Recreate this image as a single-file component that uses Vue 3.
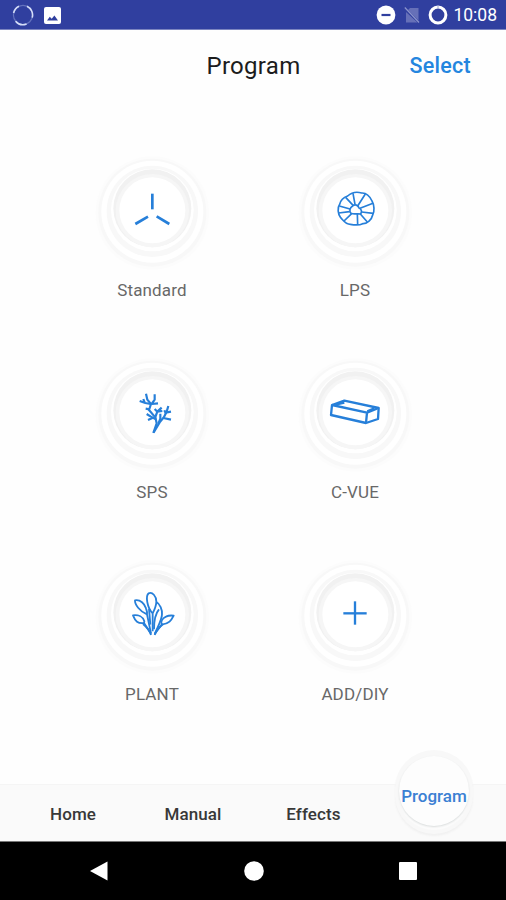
<template>
  <div class="screen">
    <header class="status-bar">
      <div class="status-group">
        <svg class="status-spinner" viewBox="0 0 22 22">
          <circle class="spin-base" cx="11" cy="11" r="9.6" />
          <path class="spin-bright" d="M15 2.3A9.6 9.6 0 0 1 20.2 13.6M3.6 17.2A9.6 9.6 0 0 0 14.6 19.9M1.6 9A9.6 9.6 0 0 1 7 2.3" />
        </svg>
        <svg class="status-image" viewBox="0 0 17 17">
          <rect width="17" height="17" rx="2" fill="#fff" />
          <path d="M3 13.4 5.8 9.8 7.7 11.8 10.4 8.5 14 13.4Z" fill="#303f9f" />
        </svg>
      </div>
      <div class="status-group">
        <svg class="status-dnd" viewBox="0 0 20 20">
          <circle cx="10" cy="10" r="9.4" fill="#fff" />
          <path d="M5.5 10h9" stroke="#303f9f" stroke-width="2.2" />
        </svg>
        <svg class="status-sim" viewBox="0 0 16 18">
          <path d="M6 2h8.5v12.5L4 4ZM2 6l11.5 10.5H2Z" fill="#6670b8" />
          <path d="M.8 1.5 15 16.5" stroke="#8b93cb" stroke-width="1.2" />
        </svg>
        <svg class="status-ring" viewBox="0 0 20 20">
          <circle cx="10" cy="10" r="7.9" fill="none" stroke="#fff" stroke-width="3" />
          <path d="M10 .5v3" stroke="#8b93cb" stroke-width=".8" />
        </svg>
        <span class="status-time">10:08</span>
      </div>
    </header>

    <div class="title-bar">
      <h1 class="title">Program</h1>
      <button type="button" class="select-btn">Select</button>
    </div>

    <main class="programs">
      <div v-for="item in programs" :key="item.id" class="program">
        <svg class="dial" viewBox="0 0 360 360">
          <circle cx="181" cy="189" r="170" fill="#fcfcfc" />
          <circle cx="181" cy="188" r="162" fill="#f8f8f8" />
          <circle cx="181" cy="185" r="153" fill="#fff" />
          <circle cx="181" cy="184" r="137" fill="#f8f8f8" />
          <circle cx="181" cy="180" r="124" fill="#fff" />
          <circle cx="181" cy="175" r="117" fill="#f1f1f1" />
          <circle cx="181" cy="182" r="110" fill="#f6f6f6" />
          <circle cx="181" cy="181" r="99" fill="#fff" />
          <g class="glyph" :stroke-width="item.stroke">
            <path v-for="d in item.paths" :key="d" :d="d" />
          </g>
        </svg>
        <span class="program-label">{{ item.label }}</span>
      </div>
    </main>

    <nav class="tabs">
      <a v-for="tab in tabs" :key="tab" class="tab">{{ tab }}</a>
      <div class="tab-current">
        <span class="tab-knob">Program</span>
      </div>
    </nav>

    <footer class="system-nav">
      <svg viewBox="0 0 20 20"><path d="M1 10 18.5.6v18.8Z" /></svg>
      <svg viewBox="0 0 20 20"><circle cx="10" cy="10" r="9.8" /></svg>
      <svg viewBox="0 0 20 20"><rect x="1" y="1" width="18" height="18" rx="1" /></svg>
    </footer>
  </div>
</template>

<script setup>
const tabs = ['Home', 'Manual', 'Effects']

const programs = [
  {
    id: 'standard',
    label: 'Standard',
    stroke: 8,
    paths: ['M181 131V178', 'M168 200 130 222', 'M194 199 232 222'],
  },
  {
    id: 'lps',
    label: 'LPS',
    stroke: 5,
    paths: [
      'M158 138C170 127 187 125 200 129C214 128 225 140 231 153C238 165 239 184 233 195C230 209 217 222 203 221C192 227 177 225 166 223C152 223 145 211 137 203C128 192 127 173 134 163C137 149 149 141 158 138Z',
      'M173 168C180 161 190 166 192 174C200 177 202 187 196 192C186 190 177 194 168 190C162 184 164 173 173 168Z',
      'M152 142 175 167M133 168 165 177M131 189 164 185M147 213 170 191M188 224 187 192M217 216 196 192M235 190 200 186M234 160 195 175M211 132 188 168M174 130 180 163',
    ],
  },
  {
    id: 'sps',
    label: 'SPS',
    stroke: 6.5,
    paths: [
      'M184 243 194 214 190 196 171 174 177 156 166 143 162 125',
      'M185 241 203 211 216 195 224 179 229 162',
      'M176 156 160 153 143 147M158 152 154 141M178 157 188 143V127M179 156 198 154',
      'M172 172 161 170M192 202 180 196 164 186M181 198 168 204M190 195 196 179 209 167M196 179 188 171M196 179 211 177',
      'M199 215 205 200V185M214 198 237 203M222 185 217 175M225 181 237 179',
    ],
  },
  {
    id: 'cvue',
    label: 'C-VUE',
    stroke: 7,
    paths: [
      'M111 159 148 146 251 168 249 201 213 213 108 189Z',
      'M111 159 216 182 251 168M216 182 213 213',
      'M122 158 148 152M217 178 238 169',
    ],
  },
  {
    id: 'plant',
    label: 'PLANT',
    stroke: 5.5,
    paths: [
      'M182 178C165 160 160 126 170 118C181 113 193 126 193 143C193 154 188 166 182 178V232',
      'M165 181C143 172 128 151 129 139C145 136 158 149 162 163C165 171 166 176 165 181L177 238',
      'M193 144C204 150 211 166 210 181C210 197 198 216 189 238',
      'M201 166C189 180 186 201 186 226M171 164 175 212',
      'M156 207C137 209 130 202 123 184C139 182 153 188 157 202L156 207 177 239',
      'M209 212C206 203 211 193 222 188C230 184 238 184 245 185C238 199 231 210 209 212L188 240',
      'M153 210C164 219 173 230 177 243M213 211C201 220 192 231 188 243',
    ],
  },
  {
    id: 'add',
    label: 'ADD/DIY',
    stroke: 7,
    paths: ['M180 142V212', 'M145 178H215'],
  },
]
</script>

<style>
body {
  margin: 0;
  background: #fff;
}
</style>

<style scoped>
.screen {
  display: flex;
  flex-direction: column;
  width: 506px;
  height: 900px;
  overflow: hidden;
  background: #fefefe;
  font-family: Roboto, 'Liberation Sans', sans-serif;
}

.status-bar {
  display: flex;
  align-items: center;
  justify-content: space-between;
  box-sizing: border-box;
  height: 30px;
  padding: 1px 9px 0 12px;
  background: #303f9f;
  border-bottom: 1px solid #7c85c0;
}

.status-group {
  display: flex;
  align-items: center;
}

.status-spinner {
  width: 22px;
  height: 22px;
  margin-right: 10px;
  fill: none;
}

.spin-base {
  stroke: #6472bd;
  stroke-width: 1.2;
}

.spin-bright {
  stroke: #d5def8;
  stroke-width: 1.6;
}

.status-image {
  width: 17px;
  height: 17px;
}

.status-dnd,
.status-ring {
  width: 20px;
  height: 20px;
}

.status-dnd {
  margin-right: 1px;
}

.status-sim {
  width: 16px;
  height: 18px;
  margin: 0 8px 0 7px;
}

.status-time {
  margin-left: 5px;
  font-size: 17.5px;
  line-height: 20px;
  color: #fff;
}

.title-bar {
  display: grid;
  grid-template-columns: 1fr auto 1fr;
  align-items: center;
  height: 72px;
  padding: 0 35px 0 36px;
}

.title {
  grid-column: 2;
  margin: 0;
  font-size: 24px;
  font-weight: 400;
  letter-spacing: 0.3px;
  color: #1c1c1c;
}

.select-btn {
  justify-self: end;
  padding: 0 0 2px;
  border: 0;
  background: none;
  font-family: inherit;
  font-size: 21.5px;
  font-weight: 500;
  letter-spacing: 0.25px;
  color: #2486df;
}

.programs {
  display: grid;
  grid-template-columns: 120px 120px;
  grid-auto-rows: 155px;
  gap: 47px 83px;
  padding: 48px 0 0 92px;
  flex: 1;
  min-height: 0;
}

.program {
  display: flex;
  flex-direction: column;
  align-items: center;
}

.dial {
  width: 120px;
  height: 120px;
}

.glyph {
  fill: none;
  stroke: #267fd9;
  stroke-linejoin: round;
}

.program-label {
  margin-top: 10px;
  font-size: 17px;
  line-height: 20px;
  letter-spacing: 0.15px;
  color: #686868;
}

.tabs {
  display: grid;
  grid-template-columns: 120px 120px 121px 120px;
  align-items: center;
  box-sizing: border-box;
  height: 57px;
  padding-left: 13px;
  background: #fafafa;
  border-top: 1px solid #f5f5f5;
}

.tab {
  padding-top: 2px;
  text-align: center;
  font-size: 17px;
  font-weight: 500;
  letter-spacing: 0.1px;
  color: #383838;
}

.tab-current {
  display: flex;
  justify-content: center;
  align-items: flex-start;
  box-sizing: border-box;
  width: 78px;
  height: 84px;
  margin-top: -43px;
  padding-top: 6px;
  justify-self: center;
  border-radius: 39px;
  background: #f8f8f8;
  box-shadow: 0 2px 2px #f1f1f1;
}

.tab-knob {
  width: 70px;
  height: 70px;
  border-radius: 50%;
  background: #fdfdfd;
  box-shadow: 0 1px 2px #d9dcdc, 0 4px 1px #fcfcfc;
  text-align: center;
  line-height: 80px;
  font-size: 17px;
  font-weight: 500;
  color: #3b80d3;
}

.system-nav {
  display: flex;
  align-items: center;
  justify-content: space-between;
  box-sizing: border-box;
  height: 59px;
  padding: 0 88px 0 89px;
  background: #000;
  border-top: 1px solid #777;
}

.system-nav svg {
  width: 20px;
  height: 20px;
  fill: #fff;
}
</style>
